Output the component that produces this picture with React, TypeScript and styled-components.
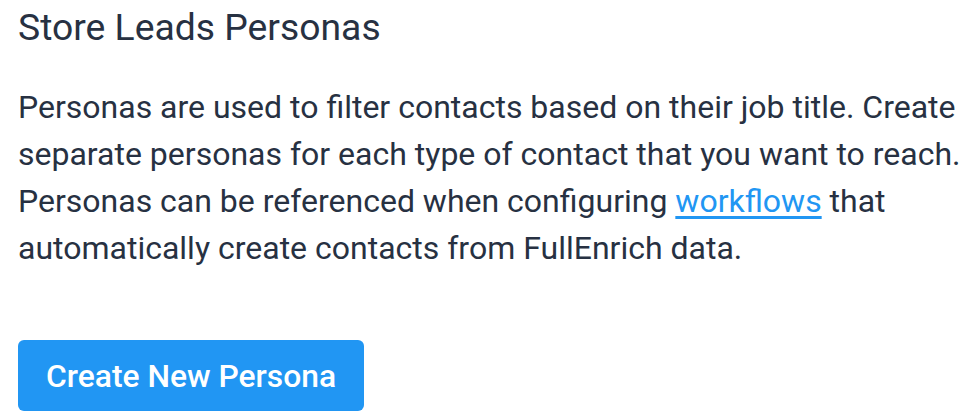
import { createGlobalStyle } from 'styled-components';
import styled from 'styled-components';

const GlobalStyle = createGlobalStyle`
  html, body {
    margin: 0;
    padding: 0;
    background: #ffffff;
  }
  body {
    font-family: Roboto, 'Noto Sans', 'Liberation Sans', sans-serif;
    color: #273142;
  }
`;

export default function App() {
  return (
    <>
      <GlobalStyle />
      <Section>
        <Title>Store Leads Personas</Title>
        <Description>
          Personas are used to filter contacts based on their job title. Create separate personas
          for each type of contact that you want to reach. Personas can be referenced when
          configuring <Link href="#">workflows</Link> that automatically create contacts from
          FullEnrich data.
        </Description>
        <PrimaryButton type="button">Create New Persona</PrimaryButton>
      </Section>
    </>
  );
}

const Section = styled.section`
  display: flex;
  flex-direction: column;
  align-items: flex-start;
  padding: 5px 18px 0;
  width: 980px;
  box-sizing: border-box;
`;

const Title = styled.h2`
  margin: 0;
  font-size: 37.3px;
  font-weight: 400;
  line-height: 44px;
  color: #273142;
`;

const Description = styled.p`
  margin: 35px 0 0;
  font-size: 32px;
  line-height: 47px;
  color: #273142;
`;

const Link = styled.a`
  color: #2196f3;
  text-decoration: underline;
  text-underline-offset: 4px;
`;

const PrimaryButton = styled.button`
  margin-top: 68px;
  height: 71px;
  padding: 0 28px;
  border: none;
  border-radius: 6px;
  background: #2196f3;
  color: #ffffff;
  font-family: Roboto, 'Noto Sans', 'Liberation Sans', sans-serif;
  font-size: 31.8px;
  font-weight: 500;
  cursor: pointer;
`;
